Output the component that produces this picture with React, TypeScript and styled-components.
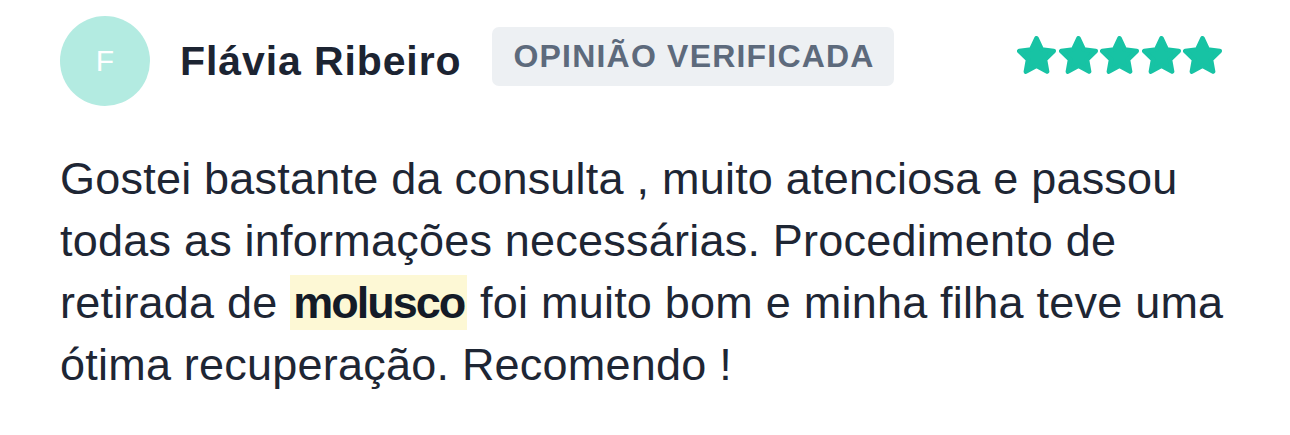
import React from "react";
import styled, { createGlobalStyle } from "styled-components";

const Global = createGlobalStyle`
  html, body { margin: 0; padding: 0; background: #ffffff; }
  body { font-family: "Liberation Sans", Arial, sans-serif; -webkit-font-smoothing: antialiased; }
`;

const Card = styled.div`
  width: 1290px;
  height: 435px;
  box-sizing: border-box;
  padding: 16px 0 0 60px;
  background: #ffffff;
`;

const Header = styled.div`
  display: flex;
  align-items: center;
  height: 90px;
  width: 1162px;
`;

const Avatar = styled.div`
  width: 90px;
  height: 90px;
  border-radius: 50%;
  background: #b3ebe1;
  color: #ffffff;
  display: flex;
  align-items: center;
  justify-content: center;
  font-size: 30px;
  flex-shrink: 0;
`;

const Name = styled.div`
  margin-left: 30px;
  font-size: 41px;
  font-weight: 700;
  color: #1c2432;
  letter-spacing: 0.9px;
  white-space: nowrap;
`;

const Badge = styled.div`
  align-self: flex-start;
  margin: 11px 0 0 31px;
  height: 59px;
  box-sizing: border-box;
  padding: 0 19px 0 21px;
  display: flex;
  align-items: center;
  background: #edf0f3;
  border-radius: 7px;
  font-size: 32px;
  font-weight: 700;
  color: #5d6a7c;
  letter-spacing: 1.2px;
  white-space: nowrap;
`;

const Stars = styled.div`
  align-self: flex-start;
  margin: 20px 0 0 auto;
  display: flex;
  gap: 2.5px;
`;

const Body = styled.p`
  margin: 42px 0 0 0;
  width: 1180px;
  font-size: 45px;
  line-height: 62px;
  letter-spacing: 0.22px;
  color: #1e2634;
`;

const Mark = styled.mark`
  background: #fdf8d5;
  color: #141b27;
  font-weight: 700;
  padding: 2px 3px;
  letter-spacing: -2px;
`;

const Star = () => (
  <svg width="39" height="38" viewBox="1.8 1.6 20.4 19.6" preserveAspectRatio="none">
    <path
      d="M12 2.8l2.75 5.75 6.25.8-4.6 4.35 1.15 6.25L12 16.9l-5.55 3.05 1.15-6.25L3 9.35l6.25-.8z"
      fill="#17c3a4"
      stroke="#17c3a4"
      strokeWidth="2.4"
      strokeLinejoin="round"
    />
  </svg>
);

export default function App() {
  return (
    <>
      <Global />
      <Card>
        <Header>
          <Avatar>F</Avatar>
          <Name>Flávia Ribeiro</Name>
          <Badge>OPINIÃO VERIFICADA</Badge>
          <Stars>
            {[0, 1, 2, 3, 4].map((i) => (
              <Star key={i} />
            ))}
          </Stars>
        </Header>
        <Body>
          Gostei bastante da consulta , muito atenciosa e passou todas as informações necessárias. Procedimento de
          retirada de <Mark>molusco</Mark> foi muito bom e minha filha teve uma ótima recuperação. Recomendo !
        </Body>
      </Card>
    </>
  );
}
